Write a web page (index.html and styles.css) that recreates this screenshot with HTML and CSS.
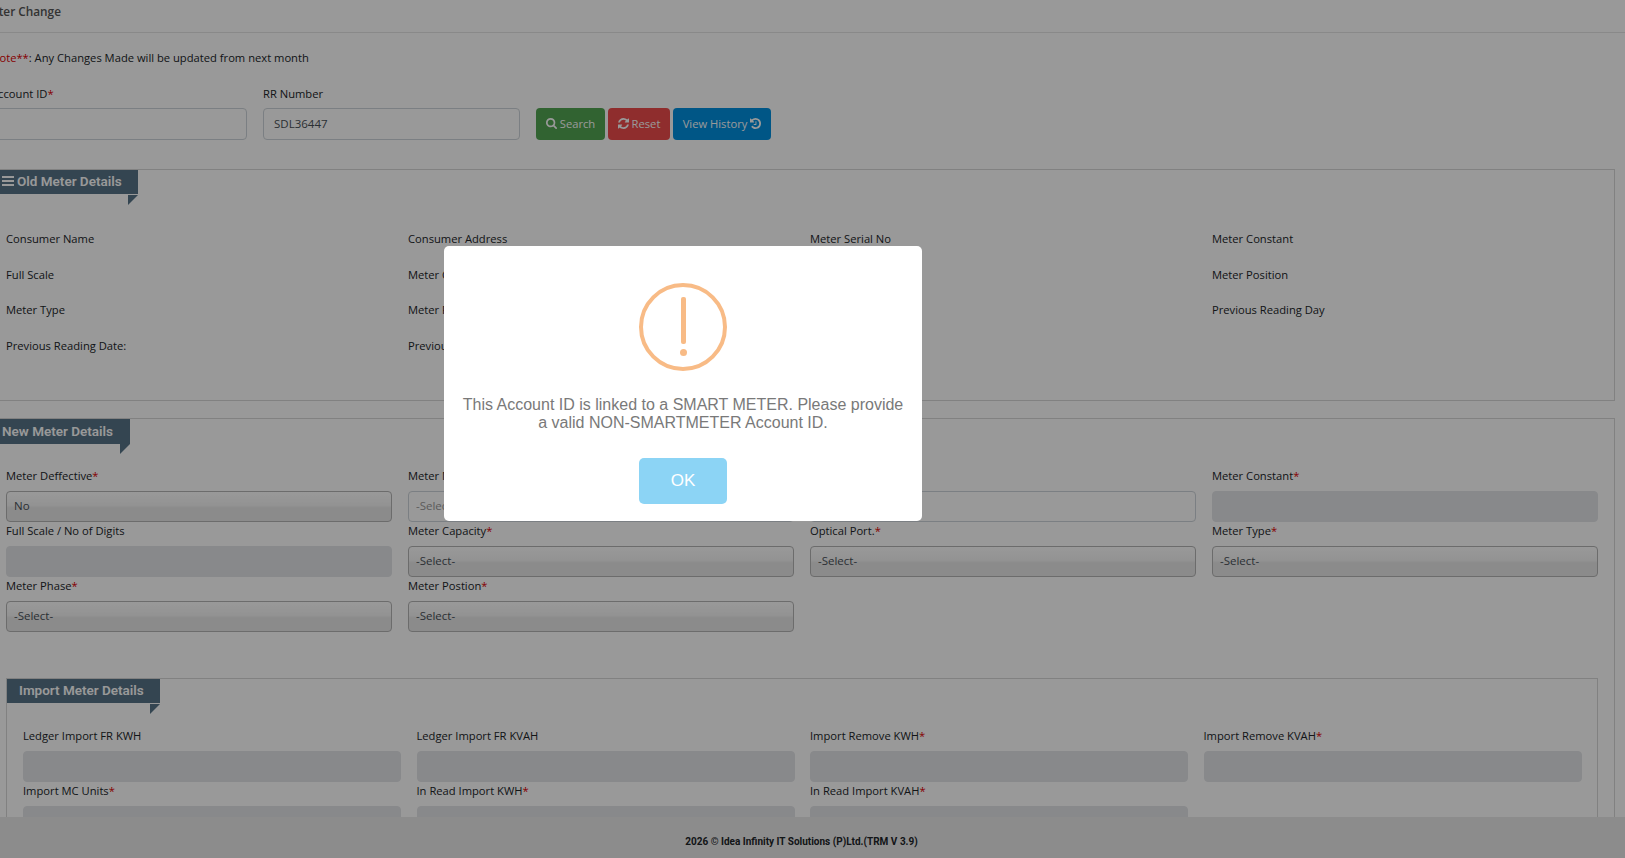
FILE: index.html
```html
<!DOCTYPE html>
<html lang="en">
<head>
<meta charset="utf-8">
<title>Meter Change</title>
<link rel="stylesheet" href="styles.css">
</head>
<body>
<div class="page">
  <header class="page-title">Meter Change</header>
  <p class="note"><span class="req">Note**</span>: Any Changes Made will be updated from next month</p>
  <div class="search-row">
    <div class="search-field"><label class="lbl">Account ID<span class="req">*</span></label><input class="ctl" type="text"></div>
    <div class="search-field"><label class="lbl">RR Number</label><input class="ctl" type="text" value="SDL36447"></div>
    <div class="btns">
      <button class="btn btn-green"><svg class="ico" viewBox="64 128 1664 1664"><path d="M1216 832q0-185-131.500-316.500t-316.500-131.500-316.500 131.500-131.500 316.500 131.500 316.500 316.500 131.500 316.500-131.500 131.500-316.500zm512 832q0 52-38 90t-90 38q-54 0-90-38l-343-342q-179 124-399 124-143 0-273.500-55.500t-225-150-150-225-55.500-273.500 55.500-273.500 150-225 225-150 273.500-55.500 273.500 55.500 225 150 150 225 55.500 273.500q0 220-124 399l343 343q37 37 37 90z"/></svg>Search</button>
      <button class="btn btn-red"><svg class="ico" viewBox="0 0 1536 1536"><path d="M1511 928q0 5-1 7-64 268-268 434.500t-478 166.500q-146 0-282.500-55t-243.500-157l-129 129q-19 19-45 19t-45-19-19-45v-448q0-26 19-45t45-19h448q26 0 45 19t19 45-19 45l-137 137q71 66 161 102t187 36q134 0 250-65t186-179q11-17 53-117 8-23 30-23h192q13 0 22.500 9.500t9.500 22.500zm25-800v448q0 26-19 45t-45 19h-448q-26 0-45-19t-19-45 19-45l138-138q-148-137-349-137-134 0-250 65t-186 179q-11 17-53 117-8 23-30 23h-199q-13 0-22.500-9.500t-9.500-22.500v-7q65-268 270-434.500t480-166.500q146 0 284 55.500t245 156.500l130-129q19-19 45-19t45 19 19 45z"/></svg>Reset</button>
      <button class="btn btn-blue">View History<svg class="ico ico-after" viewBox="0 0 1536 1536"><path d="M1536 768q0 156-61 298t-164 245-245 164-298 61q-172 0-327-72.500t-264-204.500q-7-10-6.500-22.500t8.500-20.500l137-138q10-9 25-9 16 2 23 12 73 95 179 147t225 52q104 0 198.500-40.500t163.500-109.500 109.500-163.500 40.500-198.500-40.500-198.500-109.500-163.500-163.500-109.500-198.500-40.500q-98 0-188 35.500t-160 101.500l137 138q31 30 14 69-17 40-59 40h-448q-26 0-45-19t-19-45v-448q0-42 40-59 39-17 69 14l130 129q107-101 244.500-156.500t284.500-55.500q156 0 298 61t245 164 164 245 61 298zm-640-288v448q0 14-9 23t-23 9h-320q-14 0-23-9t-9-23v-64q0-14 9-23t23-9h224v-352q0-14 9-23t23-9h64q14 0 23 9t9 23z"/></svg></button>
    </div>
  </div>

  <section class="box box-old">
    <h3 class="tab tab-old"><svg class="bars" viewBox="0 0 12 10"><path d="M0 0h12v2H0zM0 4h12v2H0zM0 8h12v2H0z"/></svg>Old Meter Details</h3>
    <div class="old-grid">
      <div class="lbl">Consumer Name</div><div class="lbl">Consumer Address</div><div class="lbl">Meter Serial No</div><div class="lbl">Meter Constant</div>
      <div class="lbl">Full Scale</div><div class="lbl">Meter Capacity</div><div class="lbl">Optical Port</div><div class="lbl">Meter Position</div>
      <div class="lbl">Meter Type</div><div class="lbl">Meter Phase</div><div class="lbl">Meter Status</div><div class="lbl">Previous Reading Day</div>
      <div class="lbl">Previous Reading Date:</div><div class="lbl">Previous Reading</div>
    </div>
  </section>

  <section class="box box-new">
    <h3 class="tab tab-new">New Meter Details</h3>
    <div class="form-grid">
      <div class="fld"><label class="lbl">Meter Deffective<span class="req">*</span></label><select class="ctl sel"><option>No</option></select></div>
      <div class="fld"><label class="lbl">Meter Make<span class="req">*</span></label><select class="ctl sel-light"><option>-Select-</option></select></div>
      <div class="fld"><label class="lbl">Meter Serial No<span class="req">*</span></label><input class="ctl" type="text"></div>
      <div class="fld"><label class="lbl">Meter Constant<span class="req">*</span></label><input class="ctl off" type="text" disabled></div>
      <div class="fld"><label class="lbl">Full Scale / No of Digits</label><input class="ctl off" type="text" disabled></div>
      <div class="fld"><label class="lbl">Meter Capacity<span class="req">*</span></label><select class="ctl sel"><option>-Select-</option></select></div>
      <div class="fld"><label class="lbl">Optical Port.<span class="req">*</span></label><select class="ctl sel"><option>-Select-</option></select></div>
      <div class="fld"><label class="lbl">Meter Type<span class="req">*</span></label><select class="ctl sel"><option>-Select-</option></select></div>
      <div class="fld"><label class="lbl">Meter Phase<span class="req">*</span></label><select class="ctl sel"><option>-Select-</option></select></div>
      <div class="fld"><label class="lbl">Meter Postion<span class="req">*</span></label><select class="ctl sel"><option>-Select-</option></select></div>
    </div>

    <section class="box box-import">
      <h3 class="tab tab-import">Import Meter Details</h3>
      <div class="form-grid import-grid">
        <div class="fld"><label class="lbl">Ledger Import FR KWH</label><input class="ctl off" type="text" disabled></div>
        <div class="fld"><label class="lbl">Ledger Import FR KVAH</label><input class="ctl off" type="text" disabled></div>
        <div class="fld"><label class="lbl">Import Remove KWH<span class="req">*</span></label><input class="ctl off" type="text" disabled></div>
        <div class="fld"><label class="lbl">Import Remove KVAH<span class="req">*</span></label><input class="ctl off" type="text" disabled></div>
        <div class="fld"><label class="lbl">Import MC Units<span class="req">*</span></label><input class="ctl off" type="text" disabled></div>
        <div class="fld"><label class="lbl">In Read Import KWH<span class="req">*</span></label><input class="ctl off" type="text" disabled></div>
        <div class="fld"><label class="lbl">In Read Import KVAH<span class="req">*</span></label><input class="ctl off" type="text" disabled></div>
      </div>
    </section>
  </section>
</div>

<footer class="footer">2026 © Idea Infinity IT Solutions (P)Ltd.(TRM V 3.9)</footer>

<div class="overlay"></div>
<div class="alert">
  <div class="alert-icon"><span class="alert-line"></span><span class="alert-dot"></span></div>
  <p class="alert-text">This Account ID is linked to a SMART METER. Please provide a valid NON-SMARTMETER Account ID.</p>
  <button class="alert-ok">OK</button>
</div>
</body>
</html>
```

FILE: styles.css
```css
* { box-sizing: border-box; }
html, body { margin: 0; height: 858px; overflow: hidden; background: #fff; }
body { font-family: "Open Sans", Roboto, sans-serif; font-size: 11.2px; color: #212529; }

.page { margin-left: -19px; width: 1644px; }
.page-title { height: 33px; padding-top: 2px; line-height: 18px; font-size: 11.8px; font-weight: 600; color: #555; border-bottom: 1px solid #e4e4e4; }
.note { margin: 16px 0 0 10px; height: 18px; line-height: 18px; font-weight: 500; }
.req { color: #e00000; }
.lbl { display: block; height: 18px; line-height: 18px; font-weight: 500; color: #212529; white-space: nowrap; }

.search-row { display: flex; align-items: flex-end; margin: 18px 0 0 10px; height: 55px; }
.search-field { width: 256px; margin-right: 16px; display: flex; flex-direction: column; gap: 5px; }
.search-field + .search-field { width: 257px; margin-right: 15px; }
.ctl { display: block; width: 100%; height: 32px; padding: 0 10px 1px; border: 1px solid #ced4da; border-radius: 4px; background: #fff; font: 11.5px "Open Sans", sans-serif; color: #495057; outline: 0; }
.btns { display: flex; gap: 3px; margin-left: 1px; }
.btn { height: 32px; border: 0; border-radius: 4px; padding: 0 0 1px; display: flex; align-items: center; justify-content: center; font: 11.2px "Open Sans", sans-serif; color: #fff; }
.btn-green { width: 69px; background: #52a552; }
.btn-red { width: 62px; background: #ee4c4c; }
.btn-blue { width: 98px; background: #0090e0; }
.ico { width: 11px; height: 11px; fill: currentColor; margin-right: 3px; }
.ico-after { margin: 0 0 0 3px; }

.box { border: 1px solid #d8d8d8; }
.box-old { margin: 29px 0 0 9px; width: 1625px; height: 232px; }
.box-new { margin: 17px 0 0 9px; width: 1625px; height: 460px; }
.tab { position: relative; margin: 0; display: flex; align-items: center; background: #587488; color: #fff; font: 600 13.5px Roboto, sans-serif; white-space: nowrap; }
.tab::after { content: ""; position: absolute; right: 0; top: 100%; border-top: 10px solid #587488; border-right: 10px solid transparent; }
.tab-old, .tab-import { height: 24px; padding-bottom: 2px; }
.tab-old::after, .tab-import::after { top: calc(100% + 1px); }
.tab-old { width: 147px; padding-left: 11px; }
.tab-new { width: 139px; height: 25px; padding: 0 0 2px 11px; }
.tab-import { width: 153px; padding-left: 12px; }
.bars { width: 12px; height: 10px; fill: currentColor; margin-right: 3px; }

.old-grid { display: grid; grid-template-columns: repeat(4, 386px); column-gap: 16px; grid-auto-rows: 35.7px; padding: 36px 0 0 15px; }
.form-grid { display: grid; grid-template-columns: repeat(4, 386px); column-gap: 16px; grid-auto-rows: 55px; padding: 23px 0 0 15px; }
.fld { display: flex; flex-direction: column; gap: 6px; }
.fld .ctl { height: 31px; }
.sel { appearance: none; -webkit-appearance: none; padding: 0 7px 3px; border-color: #b4b4b4; background: linear-gradient(#fff 0%, #f5f5f5 45%, #e8e8e8 55%, #e8e8e8 100%); }
.sel-light { appearance: none; -webkit-appearance: none; padding: 0 7px 3px; color: #999; background: #fff; }
.off { background: #e3e5e8; border-color: #e3e5e8; }

.box-import { margin: 46px 0 0 15px; width: 1592px; height: 200px; }
.import-grid { grid-template-columns: repeat(4, 378px); column-gap: 15.5px; padding: 24px 0 0 16px; }

.footer { position: fixed; left: 0; right: 0; bottom: 0; height: 41px; padding: 17px 22px 0 0; background: #eaeaea; text-align: center; font: 700 10px/16px Roboto, sans-serif; color: #212529; }
.overlay { position: fixed; inset: 0; background: rgba(0, 0, 0, .4); }

.alert { position: fixed; left: 444px; top: 246px; width: 478px; height: 275px; padding: 37px 17px 17px; background: #fff; border-radius: 5px; display: flex; flex-direction: column; align-items: center; font-family: "Liberation Sans", Arial, sans-serif; }
.alert-icon { width: 88px; height: 88px; border: 4px solid #f8bb86; border-radius: 50%; display: flex; flex-direction: column; align-items: center; padding-top: 10px; }
.alert-line { width: 5px; height: 47px; border-radius: 2px; background: #f8bb86; }
.alert-dot { width: 7px; height: 7px; margin-top: 5px; border-radius: 50%; background: #f8bb86; }
.alert-text { margin: 25px 0 0; font-size: 16px; line-height: 18px; color: #797979; text-align: center; }
.alert-ok { margin-top: 26px; width: 88px; height: 46px; border: 0; border-radius: 5px; background: #8cd4f5; color: #fff; font: 17px "Liberation Sans", Arial, sans-serif; }
```
